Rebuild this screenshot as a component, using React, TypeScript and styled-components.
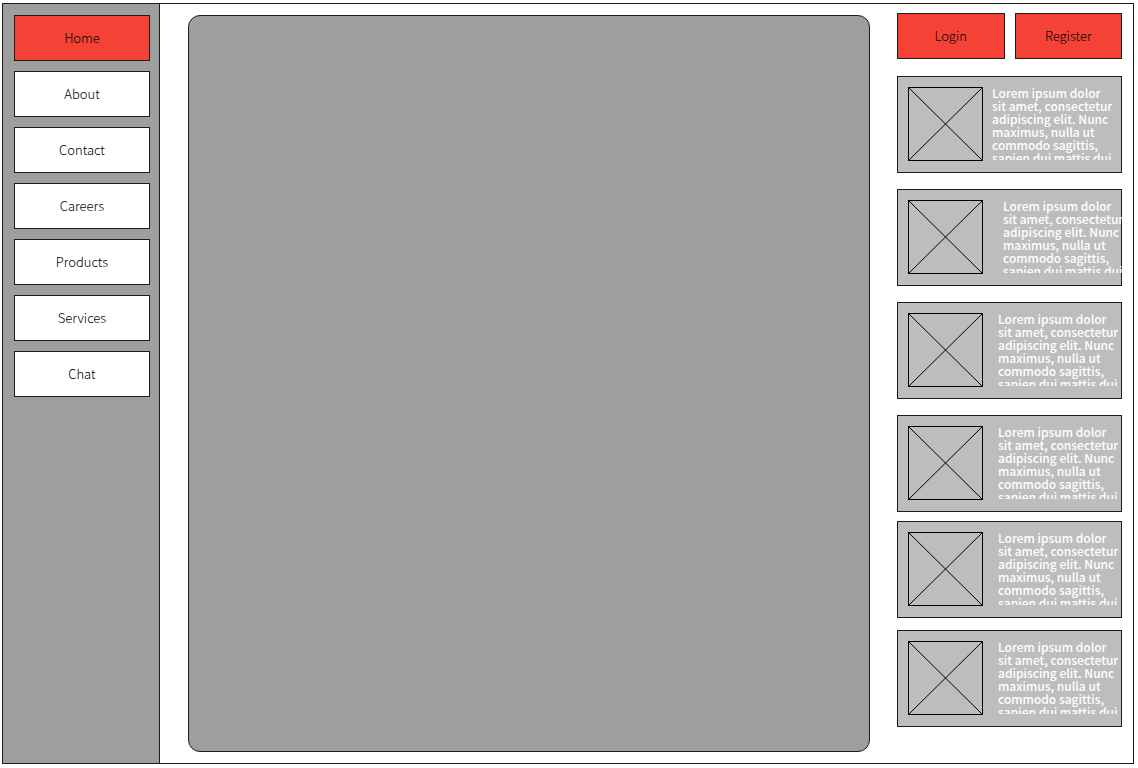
import React from 'react';
import styled, { createGlobalStyle } from 'styled-components';

const ink = '#1c1c1c';

const GlobalStyle = createGlobalStyle`
  *, *::before, *::after { box-sizing: border-box; }
  body {
    margin: 0;
    background: #ffffff;
    font-family: "Noto Sans CJK JP", "Noto Sans", sans-serif;
    font-size: 13px;
    font-weight: 300;
  }
`;

const Frame = styled.div`
  display: flex;
  min-height: calc(100vh - 7px);
  margin: 3px 4px 4px 2px;
  border: 1px solid ${ink};
`;

const Sidebar = styled.nav`
  flex: 0 0 157px;
  display: flex;
  flex-direction: column;
  gap: 10px;
  padding: 11px 9px 11px 11px;
  background: #9e9e9e;
  border-right: 1px solid ${ink};
`;

const NavLink = styled.a<{ $active?: boolean }>`
  display: flex;
  align-items: center;
  justify-content: center;
  height: 46px;
  padding-bottom: 2px;
  border: 1px solid ${ink};
  background: ${({ $active }) => ($active ? '#f44336' : '#ffffff')};
  color: #000000;
  text-decoration: none;
`;

const Content = styled.main`
  flex: 1;
  min-width: 0;
  display: flex;
  padding: 11px 27px 11px 28px;
`;

const Canvas = styled.section`
  flex: 1;
  border: 1px solid ${ink};
  border-radius: 12px;
  background: #9e9e9e;
`;

const Aside = styled.aside`
  flex: 0 0 236px;
  min-width: 0;
  padding: 9px 11px 11px 0;
`;

const Actions = styled.div`
  display: flex;
  gap: 10px;
  margin-bottom: 17px;
`;

const ActionButton = styled.button`
  flex: 1;
  height: 46px;
  padding: 0 0 2px;
  border: 1px solid ${ink};
  background: #f44336;
  color: #000000;
  font: inherit;
`;

const CardGroup = styled.div<{ $gap: number }>`
  display: flex;
  flex-direction: column;
  gap: ${({ $gap }) => $gap}px;

  & + & { margin-top: 9px; }
`;

const Card = styled.article<{ $gap: number }>`
  display: flex;
  gap: ${({ $gap }) => $gap}px;
  height: 97px;
  padding: 10px 0 10px 10px;
  border: 1px solid ${ink};
  background: #bdbdbd;
`;

const Placeholder = styled.svg`
  flex: none;
  width: 75px;
  height: 74px;
  fill: none;
  stroke: #000000;
`;

const Excerpt = styled.p`
  flex: none;
  width: 122px;
  height: 74px;
  margin: -1px 0 0;
  overflow: hidden;
  color: #ffffff;
  font-size: 12px;
  font-weight: 500;
  line-height: 13px;
`;

const links = ['Home', 'About', 'Contact', 'Careers', 'Products', 'Services', 'Chat'];

const groups = [
  { gap: 16, cards: [9, 20, 15, 15] },
  { gap: 12, cards: [15, 15] },
];

export default function App() {
  return (
    <>
      <GlobalStyle />
      <Frame>
        <Sidebar>
          {links.map((label, i) => (
            <NavLink key={label} href={`#${label.toLowerCase()}`} $active={i === 0}>
              {label}
            </NavLink>
          ))}
        </Sidebar>
        <Content>
          <Canvas />
        </Content>
        <Aside>
          <Actions>
            <ActionButton type="button">Login</ActionButton>
            <ActionButton type="button">Register</ActionButton>
          </Actions>
          {groups.map((group, g) => (
            <CardGroup key={g} $gap={group.gap}>
              {group.cards.map((gap, i) => (
                <Card key={i} $gap={gap}>
                  <Placeholder viewBox="0 0 75 74" aria-hidden="true">
                    <rect x="0.5" y="0.5" width="74" height="73" />
                    <path d="M0.5 0.5L74.5 73.5M74.5 0.5L0.5 73.5" />
                  </Placeholder>
                  <Excerpt>
                    Lorem ipsum dolor sit amet, consectetur adipiscing elit. Nunc maximus, nulla ut
                    commodo sagittis, sapien dui mattis dui
                  </Excerpt>
                </Card>
              ))}
            </CardGroup>
          ))}
        </Aside>
      </Frame>
    </>
  );
}
